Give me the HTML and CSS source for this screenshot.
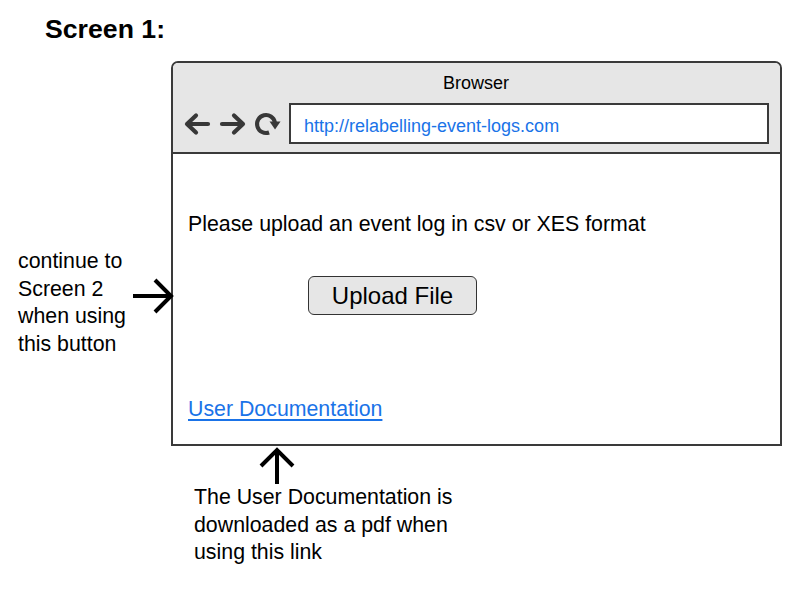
FILE: index.html
```html
<!DOCTYPE html>
<html>
<head>
<meta charset="utf-8">
<link rel="stylesheet" href="styles.css">
</head>
<body>
<div class="canvas">
  <h1 class="title">Screen 1:</h1>

  <div class="browser">
    <div class="browser-head">
      <div class="browser-title">Browser</div>
      <div class="toolbar">
        <svg class="nav-icon" width="28" height="24" viewBox="0 0 28 24">
          <path d="M25 12H4M13 3.5L4 12L13 20.5" fill="none" stroke="#383838" stroke-width="4.2" stroke-linecap="round" stroke-linejoin="round"/>
        </svg>
        <svg class="nav-icon" width="28" height="24" viewBox="0 0 28 24">
          <path d="M3 12H24M15 3.5L24 12L15 20.5" fill="none" stroke="#383838" stroke-width="4.2" stroke-linecap="round" stroke-linejoin="round"/>
        </svg>
        <svg class="nav-icon reload" width="27" height="26" viewBox="0 0 27 26">
          <path d="M15.1 21.5A9 9 0 1 1 20.9 11.4" fill="none" stroke="#383838" stroke-width="4"/>
          <path d="M15.5 10.5L26.5 10.5L21 18.5Z" fill="#383838"/>
        </svg>
        <div class="url">http://relabelling-event-logs.com</div>
      </div>
    </div>
    <div class="browser-body">
      <p class="prompt">Please upload an event log in csv or XES format</p>
      <button class="upload">Upload File</button>
      <a class="doc-link" href="#">User Documentation</a>
    </div>
  </div>

  <div class="note note-left">continue to<br>Screen 2<br>when using<br>this button</div>
  <svg class="arrow arrow-right" width="44" height="40" viewBox="0 0 44 40">
    <path d="M0 20H38M22 4L38 20L22 36" fill="none" stroke="#000" stroke-width="4"/>
  </svg>

  <svg class="arrow arrow-up" width="40" height="40" viewBox="0 0 40 40">
    <path d="M20 38V4M4 20L20 4L36 20" fill="none" stroke="#000" stroke-width="4"/>
  </svg>
  <div class="note note-bottom">The User Documentation is<br>downloaded as a pdf when<br>using this link</div>
</div>
</body>
</html>
```

FILE: styles.css
```css
html, body {
  margin: 0;
  padding: 0;
  background: #fff;
}

body {
  font-family: "Liberation Sans", Arial, sans-serif;
  color: #000;
}

.canvas {
  position: relative;
  width: 808px;
  height: 594px;
  overflow: hidden;
}

.title {
  position: absolute;
  left: 45px;
  top: 14px;
  margin: 0;
  font-size: 26.67px;
  line-height: 30px;
  font-weight: bold;
}

.browser {
  position: absolute;
  left: 171px;
  top: 61px;
  width: 611px;
  height: 385px;
  box-sizing: border-box;
  border: 2px solid #3a3a3a;
  border-radius: 7px 7px 0 0;
  display: flex;
  flex-direction: column;
  background: #fff;
}

.browser-head {
  background: #e6e6e6;
  border-bottom: 2px solid #3a3a3a;
  border-radius: 5px 5px 0 0;
  padding: 10px 11px 8px 10px;
  display: flex;
  flex-direction: column;
}

.browser-title {
  text-align: center;
  font-size: 18px;
  line-height: 20px;
  height: 20px;
}

.toolbar {
  margin-top: 10px;
  display: flex;
  align-items: center;
}

.nav-icon {
  display: block;
  flex: none;
}

.nav-icon + .nav-icon {
  margin-left: 8px;
}

.reload {
  margin-left: 7px !important;
}

.url {
  flex: 1;
  margin-left: 8px;
  height: 41px;
  box-sizing: border-box;
  border: 2px solid #3a3a3a;
  background: #fff;
  color: #1a73e8;
  font-size: 18px;
  line-height: 37px;
  padding-top: 3px;
  padding-left: 13px;
}

.browser-body {
  flex: 1;
  padding: 58px 15px 0 15px;
  display: flex;
  flex-direction: column;
  align-items: flex-start;
}

.prompt {
  margin: 0;
  font-size: 21.33px;
  line-height: 24px;
}

.upload {
  margin: 40px 0 0 120px;
  width: 169px;
  height: 39px;
  box-sizing: border-box;
  border: 1.5px solid #333;
  border-radius: 6px;
  background: #e6e6e6;
  font-family: "Liberation Sans", Arial, sans-serif;
  font-size: 24px;
  color: #000;
  padding: 0;
  line-height: 34px;
}

.doc-link {
  margin-top: 82px;
  font-size: 21.33px;
  line-height: 24px;
  color: #1a73e8;
  text-decoration: underline;
  text-underline-offset: 3px;
}

.note {
  position: absolute;
  font-size: 21.33px;
  line-height: 27.7px;
}

.note-left {
  left: 18px;
  top: 248px;
}

.note-bottom {
  left: 194px;
  top: 484px;
}

.arrow {
  position: absolute;
  display: block;
}

.arrow-right {
  left: 133px;
  top: 276px;
}

.arrow-up {
  left: 257px;
  top: 446px;
}
```
